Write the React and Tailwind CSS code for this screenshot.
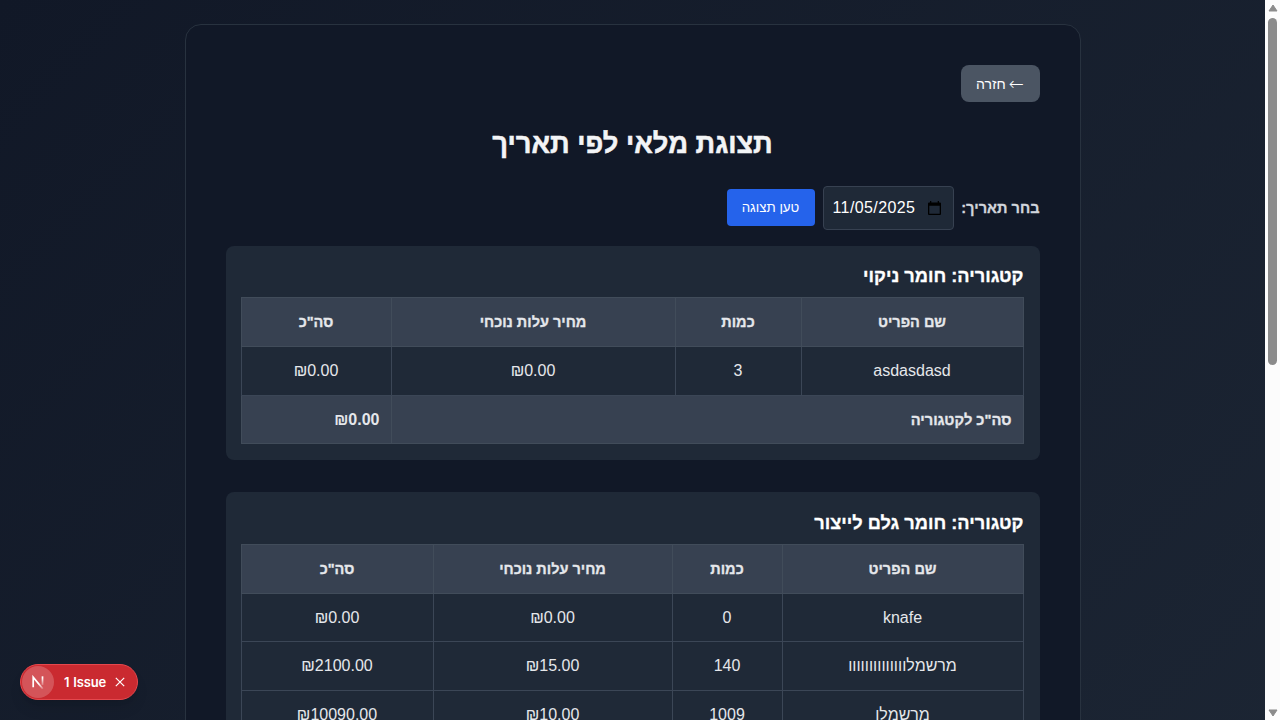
const categories = [
  {
    name: 'חומר ניקוי',
    cols: [222, 126, 284, 150],
    rows: [['asdasdasd', '3', '₪0.00', '₪0.00']],
    total: '₪0.00',
    cellPad: 'pt-0',
  },
  {
    name: 'חומר גלם לייצור',
    cols: [241, 110, 239, 192],
    rows: [
      ['knafe', '0', '₪0.00', '₪0.00'],
      ['מרשמלוווווווווווווו', '140', '₪15.00', '₪2100.00'],
      ['מרשמלו', '1009', '₪10.00', '₪10090.00'],
    ],
    total: '₪12190.00',
    cellPad: 'pt-px',
  },
];

const headers = ['שם הפריט', 'כמות', 'מחיר עלות נוכחי', 'סה"כ'];

function Category({ name, cols, rows, total, cellPad }) {
  return (
    <section className="mb-8 rounded-lg bg-[#1f2937] px-4 pt-[15.5px] pb-4">
      <h2 className="mb-[7px] pt-px text-[18.2px] leading-7 font-bold text-white [-webkit-text-stroke:0.3px]">קטגוריה: {name}</h2>
      <table className="w-[782px] table-fixed border-collapse border border-[#374151] text-base text-gray-200">
        <colgroup>
          {cols.map((w, i) => (
            <col key={i} style={{ width: w }} />
          ))}
        </colgroup>
        <thead>
          <tr className="h-[49px] bg-[#374151]">
            {headers.map((h) => (
              <th key={h} className="border border-[#414c5a] p-0 text-center text-[14.5px] leading-6 font-bold [-webkit-text-stroke:0.3px]">{h}</th>
            ))}
          </tr>
        </thead>
        <tbody>
          {rows.map((row, r) => (
            <tr key={r} className="h-[48.5px]">
              {row.map((cell, c) => (
                <td key={c} className={`border border-[#3b4656] px-0 pb-0 text-center ${cellPad}`}>{cell}</td>
              ))}
            </tr>
          ))}
          <tr className="h-[48.5px] bg-[#374151] font-bold">
            <td colSpan={3} className="border border-[#414c5a] px-[11px] pt-px pb-0 text-right text-[14.7px] leading-6 [-webkit-text-stroke:0.3px]">סה"כ לקטגוריה</td>
            <td className="border border-[#414c5a] px-[11px] pt-px pb-0 text-right">{total}</td>
          </tr>
        </tbody>
      </table>
    </section>
  );
}

function Scrollbar() {
  return (
    <div className="flex h-[720px] w-[15px] shrink-0 flex-col items-center justify-between bg-[#fcfcfc] pt-1 pb-[3px]">
      <svg width="10" height="8" viewBox="0 0 10 8" className="block shrink-0">
        <path d="M5 1 9 7H1Z" fill="#8b8b8b" stroke="#8b8b8b" strokeLinejoin="round" />
      </svg>
      <div className="mt-1.5 mb-auto h-[347px] w-[9px] rounded-full bg-[#8b8b8b]" />
      <svg width="10" height="8" viewBox="0 0 10 8" className="block shrink-0">
        <path d="M5 7 1 1H9Z" fill="#8b8b8b" stroke="#8b8b8b" strokeLinejoin="round" />
      </svg>
    </div>
  );
}

function IssueBadge() {
  return (
    <div className="absolute bottom-5 left-5 flex h-9 w-[118px] items-center rounded-full border border-[#e5484d] bg-[#ca2a30] pl-px font-['Inter',sans-serif] text-white shadow-lg">
      <span className="flex size-8 shrink-0 items-center justify-center rounded-full bg-white/20">
        <svg width="14" height="14" viewBox="0 0 14 14" fill="none">
          <defs>
            <linearGradient id="diag" x1="8" y1="8.5" x2="13" y2="15" gradientUnits="userSpaceOnUse">
              <stop stopColor="#fff" />
              <stop offset="1" stopColor="#fff" stopOpacity="0" />
            </linearGradient>
            <linearGradient id="stem" x1="10.5" y1="3" x2="10.5" y2="12" gradientUnits="userSpaceOnUse">
              <stop stopColor="#fff" />
              <stop offset="1" stopColor="#fff" stopOpacity="0" />
            </linearGradient>
          </defs>
          <path d="M2.2 12.2V2.2L11.8 13.8" stroke="url(#diag)" strokeWidth="1.7" />
          <path d="M11.5 1.3V10" stroke="url(#stem)" strokeWidth="1.7" />
        </svg>
      </span>
      <span className="ml-2.5 w-[43px] text-[13px] leading-8 font-semibold tracking-[-0.2px] whitespace-nowrap [word-spacing:1px]">1 Issue</span>
      <svg className="ml-[8px] shrink-0" width="10" height="10" viewBox="0 0 10 10" fill="none">
        <path d="M.8.8 9.2 9.2M9.2.8.8 9.2" stroke="#fff" strokeWidth="1.2" />
      </svg>
    </div>
  );
}

export default function App() {
  return (
    <div className="relative flex h-[720px] w-[1280px] overflow-hidden font-['Liberation_Sans',Arial,sans-serif]">
      <div className="h-[720px] w-[1265px] shrink-0 overflow-hidden">
        <div className="h-[1419px] bg-[linear-gradient(135deg,#111827,#1f2937)] pt-6 pb-6">
          <main dir="rtl" className="mx-auto flex h-full w-[896px] flex-col rounded-2xl border border-[#28323f] bg-[#111827] px-10 pt-10 text-gray-100">
            <button className="flex h-[37px] w-[79px] shrink-0 items-center justify-center gap-[3px] self-start rounded-lg bg-[#4b5563] text-[14px] leading-5 text-white">
              <span className="font-['DejaVu_Sans',sans-serif] text-[18px] leading-5 font-extralight">←</span>
              <span>חזרה</span>
            </button>
            <h1 className="mt-6 mb-6 text-center text-[27.3px] leading-9 font-bold text-gray-100 [-webkit-text-stroke:0.5px]">תצוגת מלאי לפי תאריך</h1>
            <div className="mb-[15.5px] flex items-center gap-2">
              <label className="w-[78px] text-[14.6px] leading-6 font-bold whitespace-nowrap text-gray-300 [-webkit-text-stroke:0.3px]">בחר תאריך:</label>
              <div dir="ltr" className="flex h-11 w-[131px] items-center justify-between rounded border border-[#374151] bg-[#1f2937] pr-3 pl-[9px] text-base text-white">
                <span className="tracking-[0.4px]">11/05/2025</span>
                <svg width="13" height="14" viewBox="0 0 13 14" fill="none">
                  <path d="M0 2.5Q0 1.5 1 1.5H2V0H3.3V1.5H9.7V0H11V1.5H12Q13 1.5 13 2.5V13Q13 14 12 14H1Q0 14 0 13ZM1.3 4.7V12.7H11.7V4.7Z" fill="#000" fillRule="evenodd" />
                </svg>
              </div>
              <button className="mb-px h-[37px] w-[88px] rounded bg-[#2563eb] text-[13.333px] leading-5 text-white">טען תצוגה</button>
            </div>
            {categories.map((c) => (
              <Category key={c.name} {...c} />
            ))}
          </main>
        </div>
      </div>
      <Scrollbar />
      <IssueBadge />
    </div>
  );
}
